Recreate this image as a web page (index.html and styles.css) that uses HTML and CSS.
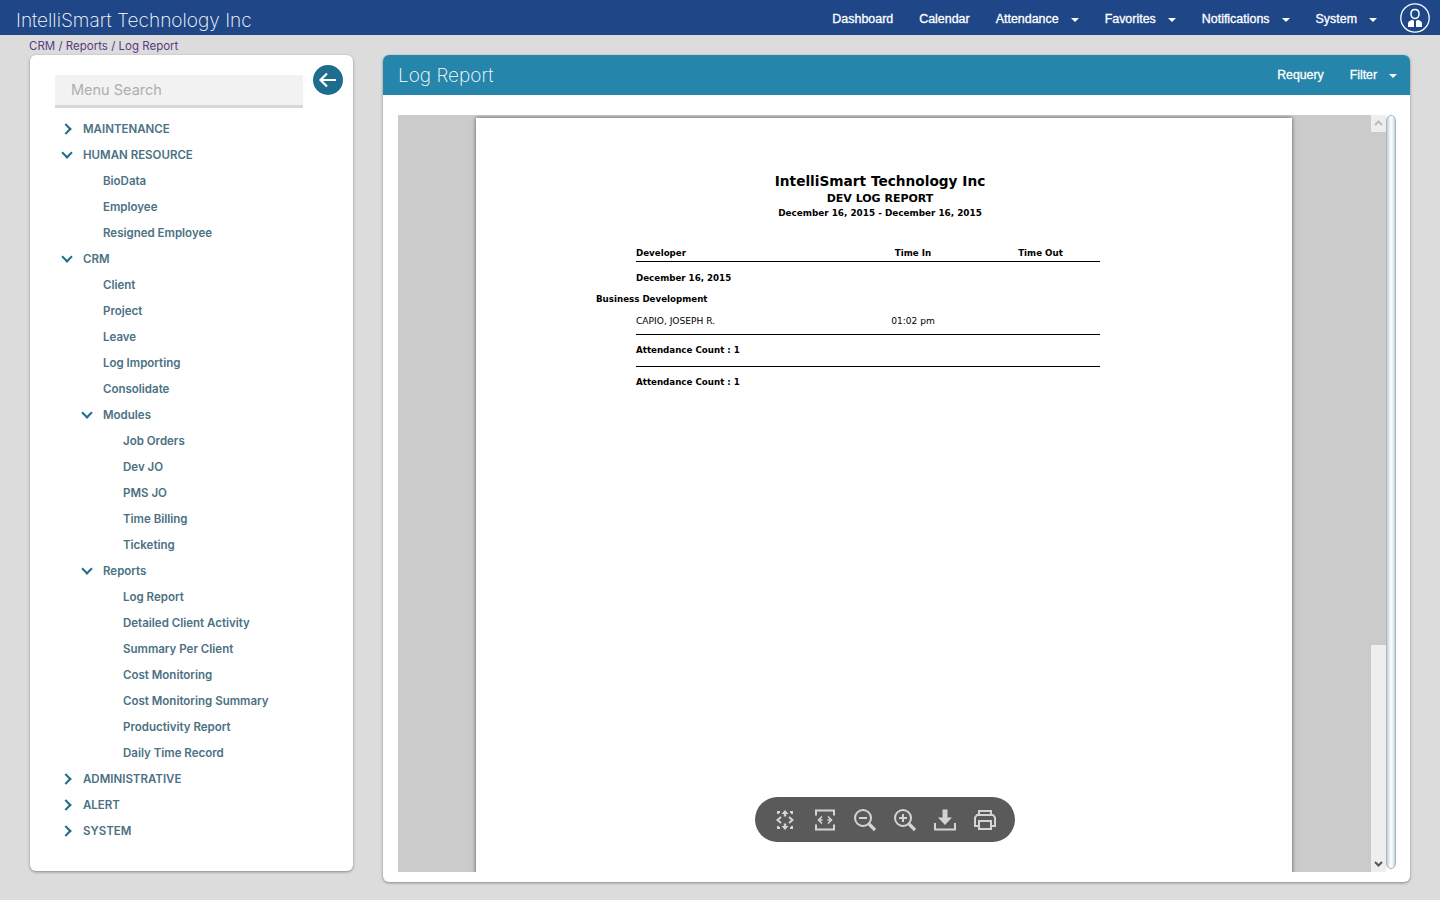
FILE: index.html
```html
<!DOCTYPE html>
<html lang="en">
<head>
  <meta charset="UTF-8" />
  <title>Log Report</title>
  <link rel="stylesheet" href="styles.css">
</head>
<body>

  <header class="topbar">
    <div class="brand">IntelliSmart Technology Inc</div>
    <nav class="topnav">
      <a>Dashboard</a>
      <a>Calendar</a>
      <a>Attendance<i class="caret"></i></a>
      <a>Favorites<i class="caret"></i></a>
      <a>Notifications<i class="caret"></i></a>
      <a>System<i class="caret"></i></a>
    </nav>
    <svg class="avatar" viewBox="0 0 30 30">
      <circle cx="15" cy="15" r="14.2" fill="#1f4788" stroke="#fff" stroke-width="1.3"/>
      <path d="M15 6.500c-2.600 0-4 1.900-4 4.300 0 2.200 1.300 4.700 4 4.700s4-2.500 4-4.700c0-2.400-1.400-4.300-4-4.300z" fill="none" stroke="#fff" stroke-width="1.500"/>
      <path d="M8 24v-3.500c0-2 1.500-3 4.500-3.800l1.500 1.300v6zM22 24v-3.500c0-2-1.500-3-4.500-3.800l-1.500 1.300v6z" fill="#fff"/>
    </svg>
  </header>

  <div class="crumbs">CRM / Reports / Log Report</div>

  <div class="content">
    <aside class="sidebar">
      <div class="search-row">
        <div class="search">Menu Search</div>
        <div class="back">
          <svg viewBox="0 0 30 30" width="30" height="30">
            <path d="M23 15H7.500M14 8.500L7.500 15l6.500 6.500" fill="none" stroke="#fff" stroke-width="2.200"/>
          </svg>
        </div>
      </div>

      <ul class="tree">
        <li class="top closed">MAINTENANCE</li>
        <li class="top open">HUMAN RESOURCE</li>
        <li class="lv1">BioData</li>
        <li class="lv1">Employee</li>
        <li class="lv1">Resigned Employee</li>
        <li class="top open">CRM</li>
        <li class="lv1">Client</li>
        <li class="lv1">Project</li>
        <li class="lv1">Leave</li>
        <li class="lv1">Log Importing</li>
        <li class="lv1">Consolidate</li>
        <li class="lv1 open">Modules</li>
        <li class="lv2">Job Orders</li>
        <li class="lv2">Dev JO</li>
        <li class="lv2">PMS JO</li>
        <li class="lv2">Time Billing</li>
        <li class="lv2">Ticketing</li>
        <li class="lv1 open">Reports</li>
        <li class="lv2">Log Report</li>
        <li class="lv2">Detailed Client Activity</li>
        <li class="lv2">Summary Per Client</li>
        <li class="lv2">Cost Monitoring</li>
        <li class="lv2">Cost Monitoring Summary</li>
        <li class="lv2">Productivity Report</li>
        <li class="lv2">Daily Time Record</li>
        <li class="top closed">ADMINISTRATIVE</li>
        <li class="top closed">ALERT</li>
        <li class="top closed">SYSTEM</li>
      </ul>
    </aside>

    <main class="panel">
      <div class="panel-head">
        <h1>Log Report</h1>
        <div class="panel-actions">
          <a>Requery</a>
          <a>Filter<i class="caret"></i></a>
        </div>
      </div>

      <div class="panel-body">
        <div class="viewer">
          <div class="canvas">
            <div class="page">
              <div class="report-head">
                <div class="r-title">IntelliSmart Technology Inc</div>
                <div class="r-sub">DEV LOG REPORT</div>
                <div class="r-date">December 16, 2015 - December 16, 2015</div>
              </div>
              <div class="r-table">
                <div class="r-cols r-cols-head">
                  <b>Developer</b><b class="c-in">Time In</b><b class="c-out">Time Out</b>
                </div>
                <div class="r-day"><b>December 16, 2015</b></div>
                <div class="r-dept"><b>Business Development</b></div>
                <div class="r-cols r-row">
                  <span>CAPIO, JOSEPH R.</span><span class="c-in">01:02 pm</span><span class="c-out"></span>
                </div>
                <div class="r-count r-count-first"><b>Attendance Count : 1</b></div>
                <div class="r-count"><b>Attendance Count : 1</b></div>
              </div>
            </div>
          </div>

          <div class="track">
            <div class="track-top"><svg viewBox="0 0 15 17" width="15" height="17"><path d="M4 10l3.500-3.500L11 10" fill="none" stroke="#bbb" stroke-width="2"/></svg></div>
            <div class="track-mid"></div>
            <div class="track-bottom"><svg viewBox="0 0 15 17" width="15" height="17"><path d="M4 7l3.500 3.500L11 7" fill="none" stroke="#555" stroke-width="2"/></svg></div>
          </div>
          <div class="pill"></div>

          <div class="toolbar">
            <svg viewBox="0 0 24 24"><path d="M5 6V4h2M17 4h2v2M19 18v2h-2M7 20H5v-2"/><path class="solid" d="M12 2l3.500 4h-2.300v2.500h-2.400V6H8.500zM12 22l3.500-4h-2.300v-2.500h-2.400V18H8.500z"/><path d="M8 9l-3.500 3L8 15M16 9l3.500 3-3.500 3"/></svg>
            <svg viewBox="0 0 24 24"><path d="M3 7.500V2.500h18v5M3 16.500v5h18v-5"/><path class="fine" d="M9 8.500L5.500 12 9 15.500M15 8.500l3.500 3.500-3.500 3.500M6 12h3.500M14.500 12H18"/></svg>
            <svg viewBox="0 0 24 24"><circle cx="10" cy="10" r="8"/><path d="M6 10h8"/><path class="thick" d="M16 16l6 6"/></svg>
            <svg viewBox="0 0 24 24"><circle cx="10" cy="10" r="8"/><path d="M6 10h8M10 6v8"/><path class="thick" d="M16 16l6 6"/></svg>
            <svg viewBox="0 0 24 24"><path d="M2 15v6.500h20V15"/><path class="solid" d="M9.500 1.500h5v8h4.500L12 17l-7-7.500h4.500z"/></svg>
            <svg viewBox="0 0 24 24"><path d="M6 7V3h12v4M6 18H2V9.500L4 7h16l2 2.500V18h-4"/><path d="M6 13h12v8H6z"/></svg>
          </div>
        </div>
      </div>
    </main>
  </div>

</body>
</html>
```

FILE: styles.css
```css
* {
  box-sizing: border-box;
}
body {
  margin: 0;
  height: 900px;
  overflow: hidden;
  background-color: #dcdcdc;
  font-family: "Liberation Sans", Arial, sans-serif;
}

/* top bar */
.topbar {
  height: 35px;
  background-color: #1f4788;
  color: #fff;
  display: flex;
  align-items: center;
  padding: 0 10px 0 16px;
}
.brand {
  font-family: Inter, sans-serif;
  font-weight: 200;
  font-size: 19.100px;
  flex: 1;
  padding-top: 5px;
}
.topnav {
  display: flex;
  gap: 26px;
  font-size: 12.450px;
  -webkit-text-stroke: 0.3px #fff;
  margin-right: 23px;
  padding-top: 2px;
}
.topnav a, .panel-actions a {
  display: flex;
  align-items: center;
}
.caret {
  display: block;
  width: 0;
  height: 0;
  margin-left: 12px;
  margin-top: 2px;
  border-left: 4px solid transparent;
  border-right: 4px solid transparent;
  border-top: 4px solid #fff;
}
.avatar {
  width: 30px;
  height: 30px;
  margin-top: 1px;
}

.crumbs {
  height: 20px;
  padding: 4px 0 0 29px;
  font-family: Inter, sans-serif;
  font-size: 11.500px;
  color: #5b3a80;
}

.content {
  display: flex;
  align-items: flex-start;
  gap: 30px;
  padding-left: 30px;
}

/* left menu */
.sidebar {
  width: 323px;
  height: 816px;
  background-color: #fff;
  border-radius: 6px;
  box-shadow: 0 1px 3px rgba(0,0,0,.4);
  padding: 10px 10px 0 25px;
}
.search-row {
  display: flex;
  justify-content: space-between;
}
.search {
  width: 248px;
  height: 33px;
  margin-top: 10px;
  padding: 6px 0 0 16px;
  background-color: #f2f2f2;
  border-bottom: 3px solid #d8d8d8;
  color: #aeaeae;
  font-family: Inter, sans-serif;
  font-size: 14.500px;
}
.back {
  width: 30px;
  height: 30px;
  border-radius: 50%;
  background-color: #1f6d8c;
}
.tree {
  list-style: none;
  margin: 8px 0 0;
  padding: 0;
  font-family: Inter, sans-serif;
  font-weight: 600;
  font-size: 11.500px;
  color: #4b7183;
}
.tree li {
  height: 26px;
  line-height: 26px;
  position: relative;
}
.top { padding-left: 28px; }
.lv1 { padding-left: 48px; }
.lv2 { padding-left: 68px; }

.closed::before, .open::before {
  content: "";
  position: absolute;
  width: 6px;
  height: 6px;
  border-right: 2px solid #1f6d8c;
  border-bottom: 2px solid #1f6d8c;
}
.closed::before {
  left: 7px;
  top: 9px;
  transform: rotate(-45deg);
}
.open::before {
  left: 8px;
  top: 7px;
  transform: rotate(45deg);
}
.lv1.open::before {
  left: 28px;
}

/* right panel */
.panel {
  width: 1027px;
  height: 827px;
  background-color: #fff;
  border-radius: 6px;
  box-shadow: 0 1px 3px rgba(0,0,0,.4);
  overflow: hidden;
}
.panel-head {
  height: 40px;
  background-color: #2585aa;
  color: #fff;
  display: flex;
  align-items: center;
  justify-content: space-between;
  padding: 0 13px 0 15px;
}
.panel-head h1 {
  margin: 0;
  font-family: Inter, sans-serif;
  font-weight: 200;
  font-size: 19px;
}
.panel-actions {
  display: flex;
  gap: 26px;
  font-size: 12.300px;
  -webkit-text-stroke: 0.3px #fff;
}
.panel-body {
  padding: 20px 14px 0 15px;
}

.viewer {
  position: relative;
  display: flex;
  height: 757px;
}
.canvas {
  width: 973px;
  height: 757px;
  background-color: #cbcbcb;
  padding-left: 78px;
  overflow: hidden;
}
.page {
  width: 816px;
  height: 800px;
  margin-top: 3px;
  background-color: #fff;
  box-shadow: 0 0 4px #555;
  color: #000;
  font-family: "DejaVu Sans", Verdana, sans-serif;
  font-size: 8.700px;
  padding-top: 55px;
}

.report-head {
  width: 808px;
  text-align: center;
  font-weight: bold;
}
.r-title {
  font-size: 13.700px;
  line-height: 17px;
}
.r-sub {
  font-size: 11px;
  line-height: 17px;
  height: 16px;
}
.r-date {
  font-size: 8.850px;
  line-height: 14px;
}

.r-table {
  margin: 26px 0 0 160px;
  width: 464px;
}
.r-cols {
  display: grid;
  grid-template-columns: 217px 120px 1fr;
}
.c-in, .c-out {
  text-align: center;
}
.c-out {
  padding-left: 8px;
}
.r-cols-head {
  height: 16px;
  line-height: 14px;
  border-bottom: 1px solid #000;
}
.r-day {
  height: 21px;
  padding-top: 10px;
  line-height: 13px;
}
.r-dept {
  margin: 10px 0 0 -40px;
  height: 14px;
  line-height: 13px;
}
.r-row {
  margin-top: 8px;
  height: 20px;
  line-height: 13px;
  border-bottom: 1px solid #000;
  font-size: 9.100px;
}
.r-count {
  height: 32px;
  padding-top: 9px;
  line-height: 13px;
}
.r-count-first {
  border-bottom: 1px solid #000;
}

/* scrollbars */
.track {
  width: 15px;
  background-color: #eeeeee;
  display: flex;
  flex-direction: column;
}
.track-top {
  height: 17px;
}
.track-mid {
  height: 513px;
  background-color: #cbcbcb;
}
.track-bottom {
  flex: 1;
  display: flex;
  align-items: flex-end;
}
.pill {
  width: 10px;
  height: 754px;
  border-radius: 5px;
  border: 1px solid #a5b9c2;
  background: linear-gradient(to right, #c3d2d8, #f4f8f9 40%, #fbfdfd 60%, #c3d2d8);
}

/* floating toolbar */
.toolbar {
  position: absolute;
  left: 357px;
  top: 682px;
  width: 260px;
  height: 45px;
  border-radius: 23px;
  background-color: #5a5a5a;
  display: flex;
  align-items: center;
  justify-content: center;
  gap: 16px;
}
.toolbar svg {
  width: 24px;
  height: 24px;
  fill: none;
  stroke: #d4d4d4;
  stroke-width: 2;
}
.toolbar .solid {
  fill: #d4d4d4;
  stroke: none;
}
.toolbar .thick {
  stroke-width: 3.200;
}
.toolbar .fine {
  stroke-width: 1.600;
}
```
